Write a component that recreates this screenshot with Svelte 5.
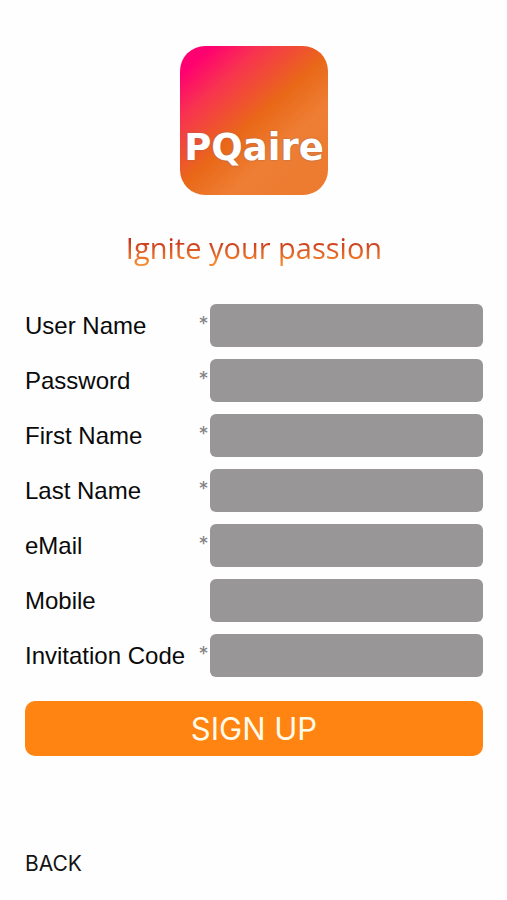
<script lang="ts">
	type Field = {
		id: string;
		label: string;
		type: 'text' | 'password' | 'email' | 'tel';
		required: boolean;
	};

	const fields: Field[] = [
		{ id: 'username', label: 'User Name', type: 'text', required: true },
		{ id: 'password', label: 'Password', type: 'password', required: true },
		{ id: 'firstname', label: 'First Name', type: 'text', required: true },
		{ id: 'lastname', label: 'Last Name', type: 'text', required: true },
		{ id: 'email', label: 'eMail', type: 'email', required: true },
		{ id: 'mobile', label: 'Mobile', type: 'tel', required: false },
		{ id: 'invitation', label: 'Invitation Code', type: 'text', required: true }
	];

	let values = $state<Record<string, string>>({});
</script>

<main>
	<div class="logo"><span>PQaire</span></div>
	<p class="tagline">Ignite your passion</p>

	<form onsubmit={(e) => e.preventDefault()}>
		{#each fields as field (field.id)}
			<div class="row">
				<label for={field.id}>{field.label}</label>
				<span class="mark" aria-hidden="true">{field.required ? '*' : ''}</span>
				<input
					id={field.id}
					type={field.type}
					required={field.required}
					bind:value={values[field.id]}
				/>
			</div>
		{/each}
		<button class="submit" type="submit">SIGN UP</button>
	</form>

	<button class="back" type="button" onclick={() => history.back()}>BACK</button>
</main>

<style>
	:global(body) {
		margin: 0;
		background: #fefefe;
	}

	main {
		display: flex;
		flex-direction: column;
		padding: 46px 24px 20px 25px;
		font-family: Inter, 'Liberation Sans', sans-serif;
		color: #0a0a0a;
	}

	.logo {
		display: flex;
		flex-direction: column;
		justify-content: flex-end;
		align-items: center;
		align-self: center;
		box-sizing: border-box;
		width: 148px;
		height: 149px;
		padding-bottom: 21px;
		border-radius: 25px;
		background: linear-gradient(138deg, #ff0070 10%, #f83350 26%, #e96818 50%, #ee7e34 68%, #ec7a2e);
		color: #fff;
		font-family: 'DejaVu Sans', sans-serif;
		font-size: 37px;
		font-weight: 700;
		line-height: 52px;
		text-shadow: 0 0 2px #9a6a58;
	}

	.tagline {
		align-self: center;
		margin: 34px 0 0;
		background: linear-gradient(#c22e1c 25%, #f58a30 90%);
		background-clip: text;
		color: transparent;
		font-family: 'Open Sans', sans-serif;
		font-size: 29px;
		line-height: 38px;
	}

	form {
		display: flex;
		flex-direction: column;
		gap: 12px;
		margin-top: 37px;
	}

	.row {
		display: flex;
		align-items: center;
	}

	label {
		flex: 0 0 172px;
		font-family: 'Liberation Sans', sans-serif;
		font-size: 24px;
		line-height: 28px;
		white-space: nowrap;
	}

	.mark {
		flex: 0 0 13px;
		padding-bottom: 4px;
		color: #858383;
		font-size: 20px;
		line-height: 28px;
		text-align: center;
	}

	input {
		flex: 1;
		box-sizing: border-box;
		min-width: 0;
		height: 43px;
		padding: 0 10px;
		border: none;
		border-radius: 6px;
		background: #989696;
		color: #fff;
		font: inherit;
		font-size: 22px;
	}

	button {
		border: none;
		font-family: inherit;
		cursor: pointer;
	}

	.submit {
		height: 55px;
		margin-top: 12px;
		border-radius: 10px;
		background: #ff8412;
		color: #fffbe8;
		font-size: 31px;
	}

	.back {
		align-self: flex-start;
		margin-top: 94px;
		padding: 0;
		background: none;
		color: #141414;
		font-size: 21px;
		line-height: 28px;
	}
</style>
